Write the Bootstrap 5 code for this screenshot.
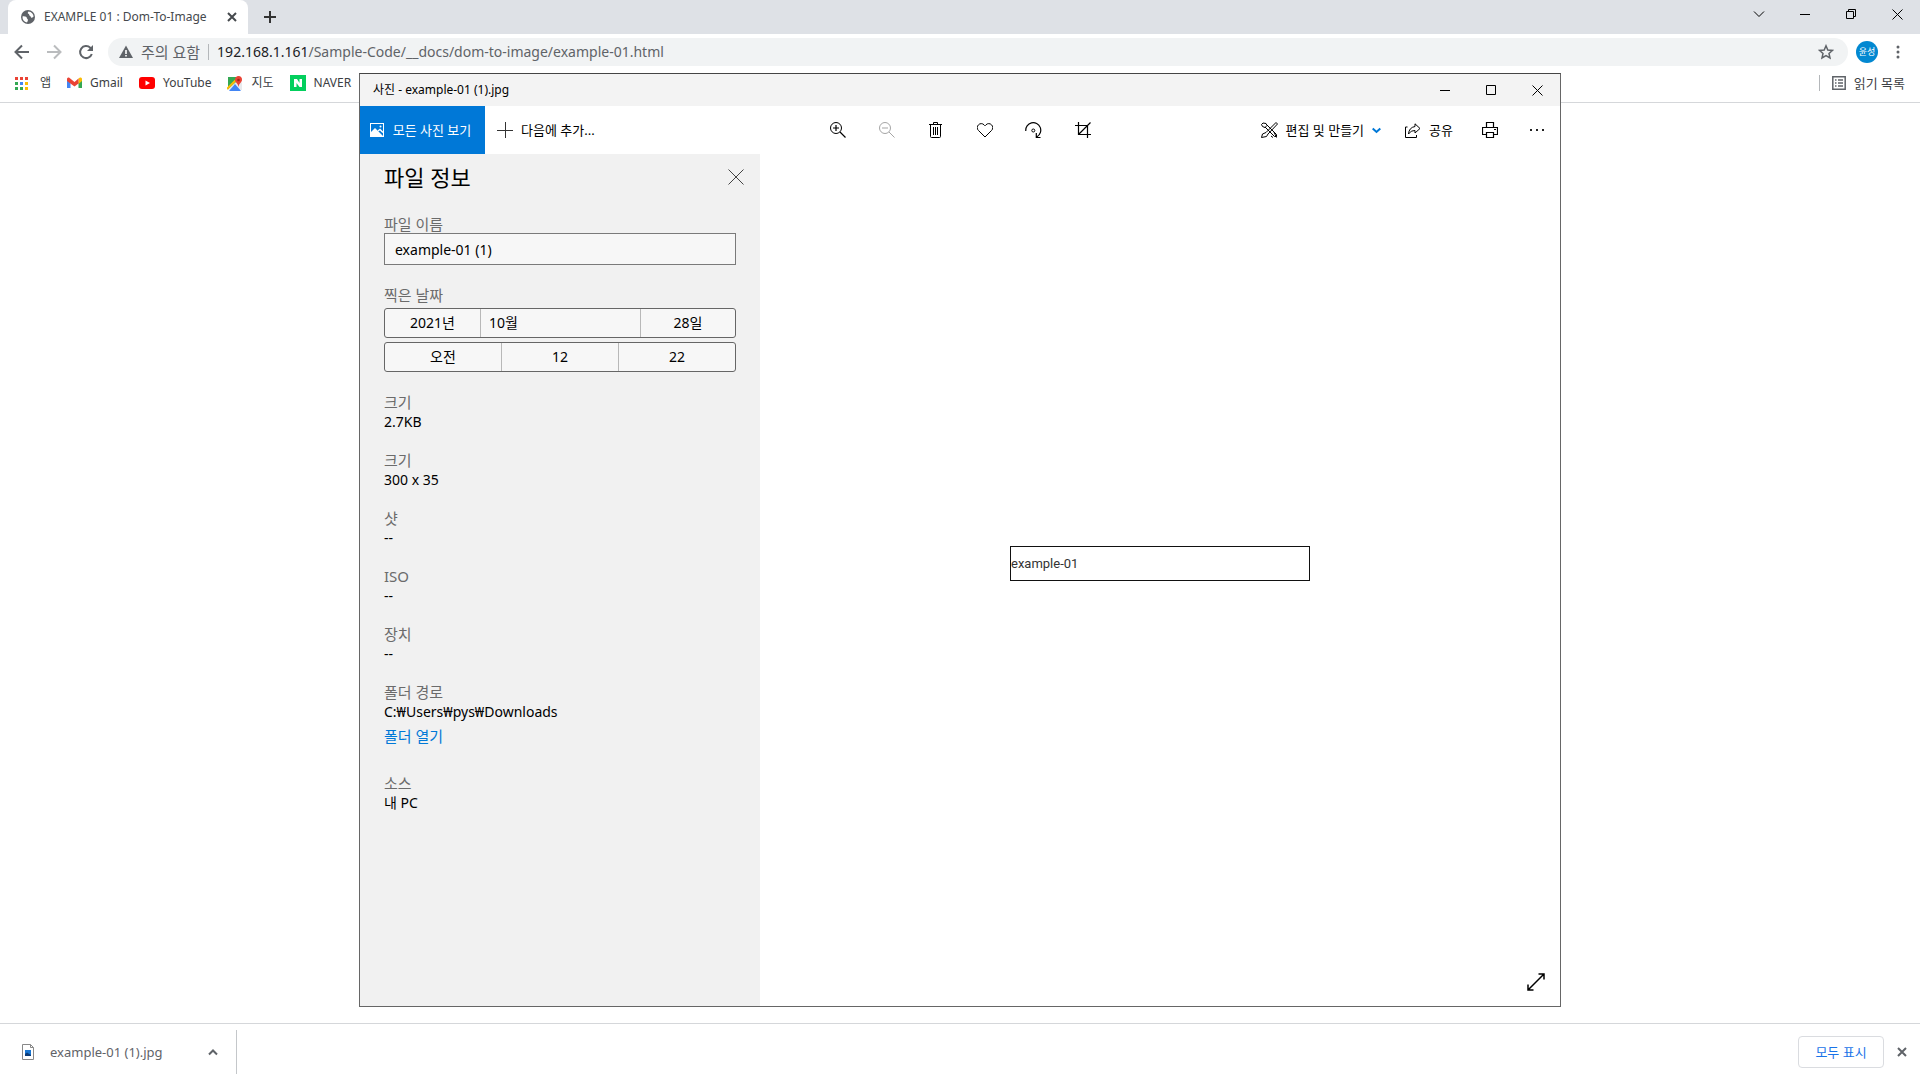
<!DOCTYPE html>
<html lang="ko">
<head>
<meta charset="utf-8">
<meta name="viewport" content="width=device-width, initial-scale=1">
<title>EXAMPLE 01 : Dom-To-Image</title>
<link href="https://cdn.jsdelivr.net/npm/bootstrap@5.3.0/dist/css/bootstrap.min.css" rel="stylesheet">
<style>
  body { font-family: "Noto Sans", "Noto Sans CJK KR", sans-serif; font-size: 12px; line-height: 20px; color: #000; background: #fff; overflow: hidden; }
  button, input { font: inherit; color: inherit; }
  svg { display: block; flex: none; }
  svg:not([fill]) { fill: none; }
  svg:not([stroke]) { stroke: currentColor; }
  .plain { background: none; border: 0; padding: 0; display: flex; align-items: center; justify-content: center; }
  /* browser chrome */
  .tabstrip { height: 34px; background: #dee1e6; padding-left: 8px; }
  .browser-tab { width: 240px; background: #fff; border-radius: 8px 8px 0 0; padding: 0 7px 0 12px; color: #45494d; }
  .ctl { width: 46px; height: 28px; }
  .addressbar { height: 36px; padding: 0 6px; color: #5f6368; }
  .nav-ico { width: 32px; height: 28px; }
  .omnibox { height: 28px; border-radius: 14px; background: #f1f3f4; margin-left: 6px; padding: 0 10px 0 11px; font-size: 15px; }
  .star { width: 24px; }
  .url-line { white-space: nowrap; font-size: 14px; }
  .url-host { color: #202124; }
  .avatar { width: 22px; height: 22px; border-radius: 50%; background: #0288d1; color: #fff; font-size: 9px; }
  .bookmarks { height: 33px; border-bottom: 1px solid #d5d7da; padding: 0 15px 6px; color: #3c4043; }
  .bookmarks a { color: inherit; text-decoration: none; display: flex; align-items: center; gap: 8px; }
  .bookmarks .reading { font-size: 13px; }
  .vline { width: 1px; height: 16px; background: #b4b7ba; }
  .downloads { height: 57px; border-top: 1px solid #d5d7da; color: #5f6368; font-size: 13px; }
  .dl-item { width: 237px; height: 44px; border-right: 1px solid #c4c7ca; padding: 0 18px 0 22px; }
  .dl-close { width: 36px; height: 32px; }
  .show-all { width: 86px; height: 32px; border: 1px solid #dadce0; border-radius: 4px; color: #1a73e8; background: #fff; }
  /* photo viewer window */
  .photo-win { position: absolute; inset: 73px 359px; border: 1px solid #666; border-top-color: #444; background: #fff; display: flex; flex-direction: column; }
  .win-title { height: 32px; background: #f3f3f3; padding-left: 13px; }
  .win-tools { height: 48px; font-size: 13px; }
  .see-all { width: 125px; background: #0078d7; color: #fff; gap: 9px; }
  .tool { width: 49px; height: 48px; }
  .info { width: 400px; background: #f1f1f1; padding: 12px 24px; font-size: 14px; }
  .info-head { margin: 0 -8px 27px 0; }
  .info h1 { font-size: 22px; line-height: 22px; margin: 0; font-weight: 400; }
  .info-label { display: block; color: #6b6b6b; font-size: 15px; line-height: 18px; }
  .info dt { color: #6b6b6b; font-weight: 400; font-size: 15px; }
  .info dd { margin: 0; }
  .info dl { margin: 20px 0 0; display: flex; flex-direction: column; gap: 18px; }
  .open-folder { color: #0078d7; font-size: 15px; }
  .name-box { height: 32px; border: 1px solid #7a7a7a; background: #f7f7f7; padding: 0 10px; width: 100%; display: block; border-radius: 0; margin-bottom: 21px; }
  .picker { height: 30px; border: 1px solid #666; border-radius: 3px; background: #f7f7f7; display: flex; margin-top: 4px; }
  .picker button { flex: 1 1 0; }
  .picker button + button { border-left: 1px solid #b8b8b8; }
  .picker .w-year { flex: 0 0 95px; }
  .photo { width: 300px; height: 35px; border: 1px solid #111; font: 13px/33px Roboto, sans-serif; color: #333; }
  .stage { padding-bottom: 33px; position: relative; }
  .expand { position: absolute; right: 15px; bottom: 15px; }
</style>
<script src="https://cdn.jsdelivr.net/npm/bootstrap@5.3.0/dist/js/bootstrap.bundle.min.js"></script>
</head>
<body class="vh-100 d-flex flex-column position-relative">
<header>
  <div class="tabstrip d-flex">
    <div class="browser-tab d-flex align-items-center">
      <svg width="16" height="16" viewBox="0 0 16 16" stroke="none"><circle cx="8" cy="8" r="7" fill="#5f6368"/><path d="M2.5 7.5C5 7 7 8 7 9.500C8.500 10 8 12 7 13.500C4 13 2.300 10.500 2.500 7.500ZM8.500 2.500C7 4 8 5 9 5C9 7 11 7 11 8.500C12 9 13 8.500 13.600 7.500C13.500 5 11.500 2.800 8.500 2.500Z" fill="#fff"/></svg>
      <span class="ms-2 flex-grow-1 text-nowrap">EXAMPLE 01 : Dom-To-Image</span>
      <button class="plain p-1" aria-label="탭 닫기"><svg width="10" height="10" stroke-width="2"><path d="M1 1L9 9M9 1L1 9"/></svg></button>
    </div>
    <button class="plain ms-3" aria-label="새 탭"><svg width="12" height="12" stroke="#333" stroke-width="2"><path d="M6 0V12M0 6H12"/></svg></button>
    <div class="d-flex ms-auto">
      <button class="plain ctl" aria-label="탭 검색"><svg width="12" height="12"><path d="M1 3.500L6 8.500L11 3.500"/></svg></button>
      <button class="plain ctl" aria-label="최소화"><svg width="10" height="10"><path d="M0 5.500H10"/></svg></button>
      <button class="plain ctl" aria-label="이전 크기로"><svg width="10" height="10"><path d="M.5 2.500H7.500V9.500H.5ZM2.500 2.500V.5H9.500V7.500H7.500"/></svg></button>
      <button class="plain ctl" aria-label="닫기"><svg width="11" height="11"><path d="M.5 .5L10.500 10.500M10.500 .5L.5 10.500"/></svg></button>
    </div>
  </div>
  <div class="addressbar d-flex align-items-center">
    <button class="plain nav-ico" aria-label="뒤로"><svg width="16" height="16" stroke-width="2"><path d="M15 8H2M8 1.500L1.500 8L8 14.500"/></svg></button>
    <button class="plain nav-ico" aria-label="앞으로"><svg width="16" height="16" stroke="#babcbe" stroke-width="2"><path d="M1 8H14M8 1.500L14.500 8L8 14.500"/></svg></button>
    <button class="plain nav-ico" aria-label="새로고침"><svg width="16" height="16" stroke-width="2"><path d="M13.800 10A6 6 0 1 1 12.300 3.800L13 4.500"/><path d="M15 1V7H9Z" fill="currentColor" stroke="none"/></svg></button>
    <div class="omnibox d-flex align-items-center flex-grow-1">
      <svg width="14" height="14" stroke="none"><path d="M7 .5L14 13H0Z" fill="#5f6368"/><path d="M6.200 5H7.800V9H6.200ZM6.200 10H7.800V11.500H6.200Z" fill="#fff"/></svg>
      <span class="ms-2 text-nowrap">주의 요함</span>
      <span class="vline mx-2"></span>
      <a href="#" class="url-line text-decoration-none flex-grow-1 text-reset"><span class="url-host">192.168.1.161</span>/Sample-Code/__docs/dom-to-image/example-01.html</a>
      <button class="plain star" aria-label="북마크"><svg width="16" height="16" stroke-width="1.500"><path d="M8 1.800L9.800 6L14.500 6.400L11 9.500L12 14L8 11.700L4 14L5 9.500L1.500 6.400L6.200 6Z"/></svg></button>
    </div>
    <button class="plain avatar ms-2 me-1" aria-label="윤성">윤성</button>
    <button class="plain nav-ico" aria-label="메뉴"><svg width="4" height="14" fill="currentColor" stroke="none"><circle cx="2" cy="2" r="1.500"/><circle cx="2" cy="7" r="1.500"/><circle cx="2" cy="12" r="1.500"/></svg></button>
  </div>
  <nav class="bookmarks d-flex align-items-center" aria-label="북마크">
    <a href="#" class="me-3"><svg width="13" height="13" stroke="none"><path d="M0 0H3V3H0ZM5 0H8V3H5ZM10 0H13V3H10Z" fill="#ea4335"/><path d="M0 5H3V8H0ZM0 10H3V13H0ZM5 10H8V13H5Z" fill="#34a853"/><path d="M5 5H8V8H5Z" fill="#4285f4"/><path d="M10 5H13V8H10ZM10 10H13V13H10Z" fill="#fbbc04"/></svg><span class="ps-1">앱</span></a>
    <a href="#" class="me-3"><svg width="15" height="12" stroke="none"><path d="M0 1.500V11H3.500V5Z" fill="#4285f4"/><path d="M15 1.500V11H11.500V5Z" fill="#34a853"/><path d="M11.500 1.500L13 .5Q15 0 15 2V4L11.500 7Z" fill="#fbbc04"/><path d="M0 2Q0 0 2 .5L7.500 5L11.500 1.500V6.500L7.500 9.500L0 4Z" fill="#ea4335"/></svg><span>Gmail</span></a>
    <a href="#" class="me-3"><svg width="16" height="12" stroke="none"><rect width="16" height="12" rx="3" fill="#f00"/><path d="M6.500 3.500L11 6L6.500 8.500Z" fill="#fff"/></svg><span>YouTube</span></a>
    <a href="#" class="me-3"><svg width="16" height="15" stroke="none"><path d="M1 1H11L15 7V14H1Z" fill="#e8eaed"/><path d="M1 1H10L9 6L1 13Z" fill="#34a853"/><path d="M2 15L8 8L14 15Z" fill="#4285f4"/><path d="M0 13L12 1" stroke="#fbbc04" stroke-width="2"/><path d="M11.500 0A3.800 3.800 0 0 1 15 4C15 6.500 12 7 11.500 11C11 7 8 6.500 8 4A3.600 3.600 0 0 1 11.500 0Z" fill="#ea4335"/><circle cx="11.500" cy="4" r="1.300" fill="#a52714"/></svg><span>지도</span></a>
    <a href="#"><svg width="16" height="16" stroke="none"><rect width="16" height="16" fill="#03cf5d"/><path d="M4 4H7L9.500 8V4H12V12H9.500L6.500 8V12H4Z" fill="#fff"/></svg><span>NAVER</span></a>
    <span class="vline ms-auto me-2"></span>
    <a href="#" class="reading ms-1"><svg width="14" height="14" stroke="#5f6368" stroke-width="1.500"><path d="M.8 .8H13.200V13.200H.8ZM3 4H4.500M6 4H11M3 7H4.500M6 7H11M3 10H4.500M6 10H11"/></svg><span>읽기 목록</span></a>
  </nav>
</header>

<main class="flex-grow-1"></main>

<section class="photo-win" aria-label="사진">
  <div class="win-title d-flex align-items-center">
    <span class="flex-grow-1">사진 - example-01 (1).jpg</span>
    <button class="plain ctl" aria-label="최소화"><svg width="10" height="10"><path d="M0 5.500H10"/></svg></button>
    <button class="plain ctl" aria-label="최대화"><svg width="10" height="10"><path d="M.5 .5H9.500V9.500H.5Z"/></svg></button>
    <button class="plain ctl" aria-label="닫기"><svg width="11" height="11"><path d="M.5 .5L10.500 10.500M10.500 .5L.5 10.500"/></svg></button>
  </div>
  <div class="win-tools d-flex">
    <div class="d-flex flex-fill w-50">
      <button class="plain see-all pe-1"><svg width="14" height="14"><rect x=".5" y=".5" width="13" height="13"/><path d="M1 9L5 5L13 13H1Z" fill="currentColor" stroke="none"/><path d="M8 8L10 6.500L13 9.500" stroke-width="1.500"/><circle cx="10.500" cy="3.500" r="1" fill="currentColor" stroke="none"/></svg><span>모든 사진 보기</span></button>
      <button class="plain gap-2 ms-2 ps-1"><svg width="16" height="16" stroke="#333"><path d="M8.500 0V16M0 8.500H16"/></svg><span>다음에 추가...</span></button>
    </div>
    <div class="d-flex">
      <button class="plain tool" aria-label="확대"><svg width="16" height="16"><circle cx="6" cy="6" r="5.500"/><path d="M10 10L15.500 15.500M3 6H9M6 3V9" stroke-width="1.200"/></svg></button>
      <button class="plain tool" aria-label="축소" disabled><svg width="16" height="16" stroke="#a5a5a5"><circle cx="6" cy="6" r="5.500"/><path d="M10 10L15.500 15.500M3 6H9"/></svg></button>
      <button class="plain tool" aria-label="삭제"><svg width="13" height="16"><path d="M0 2.500H13M4.500 2V.5H8.500V2M1.500 3V14.500Q1.500 15.500 2.500 15.500H10.500Q11.500 15.500 11.500 14.500V3M4.500 5V13M6.500 5V13M8.500 5V13"/></svg></button>
      <button class="plain tool" aria-label="즐겨찾기"><svg width="16" height="16"><path d="M8 15L1.500 8.500A3.800 3.800 0 0 1 1.500 2.800A3.800 3.800 0 0 1 7 2.800L8 3.800L9 2.800A3.800 3.800 0 0 1 14.500 2.800A3.800 3.800 0 0 1 14.500 8.500Z"/></svg></button>
      <button class="plain tool" aria-label="회전"><svg width="17" height="17"><path d="M.8 9A7.500 7.500 0 1 1 12 14.700M11.300 11V15.500H15.500" stroke-width="1.200"/><circle cx="8.300" cy="8.500" r="1.500"/></svg></button>
      <button class="plain tool" aria-label="자르기"><svg width="16" height="16"><path d="M0 3.500H12.500V16M3.500 0V12.500H16M3.500 12.500L15.500 .5" stroke-width="1.200"/></svg></button>
    </div>
    <div class="d-flex flex-fill w-50 justify-content-end">
      <button class="plain gap-2 pe-3"><svg width="17" height="16"><path d="M4 5L13.500 14.500H15.500V12.500L6 3M2 1L5 1.500L6 3.500L4 5.500L1.500 4.500L.5 2.500ZM15 .5L5 10.500M16.500 2L7 12M15 .5L16.500 2M5 10.500L1.500 12L.5 15.500L5.500 14.500L7 12M10 14L12 15.500M13 10L15.500 15.500"/></svg><span>편집 및 만들기</span><svg width="9" height="9" stroke="#0078d7" stroke-width="2"><path d="M.7 2.500L4.500 6L8.300 2.500"/></svg></button>
      <button class="plain gap-2 px-2"><svg width="16" height="15"><path d="M2.500 4H.5V14.500H11.500V12M10 .8L15 5.500L10 10V7.500Q6 7 3.500 11Q4 4.500 10 3.500Z"/></svg><span>공유</span></button>
      <button class="plain tool ms-1" aria-label="인쇄"><svg width="16" height="16"><path d="M4.500 5V.5H11.500V5M4 12.500H.5V5.500H15.500V12.500H12M4.500 10.500H11.500V15.500H4.500ZM12 7.500H14" stroke-width="1.200"/></svg></button>
      <button class="plain ctl h-100" aria-label="더 보기"><svg width="14" height="4" stroke="none"><path d="M0 1H2V3H0ZM6 1H8V3H6ZM12 1H14V3H12Z" fill="#222"/></svg></button>
    </div>
  </div>
  <div class="d-flex flex-grow-1">
    <aside class="info">
      <div class="info-head d-flex align-items-center">
        <h1 class="flex-grow-1">파일 정보</h1>
        <button class="plain" aria-label="닫기"><svg width="16" height="16" stroke="#444"><path d="M.5 .5L15.500 15.500M15.500 .5L.5 15.500"/></svg></button>
      </div>
      <label for="fname" class="info-label">파일 이름</label>
      <input id="fname" class="name-box" value="example-01 (1)">
      <div id="taken" class="info-label">찍은 날짜</div>
      <div class="picker" role="group" aria-labelledby="taken">
        <button class="plain w-year">2021년</button><button class="plain justify-content-start px-2">10월</button><button class="plain w-year">28일</button>
      </div>
      <div class="picker" role="group" aria-labelledby="taken">
        <button class="plain">오전</button><button class="plain">12</button><button class="plain">22</button>
      </div>
      <dl>
        <div><dt>크기</dt><dd>2.7KB</dd></div>
        <div><dt>크기</dt><dd>300 x 35</dd></div>
        <div><dt>샷</dt><dd>--</dd></div>
        <div><dt>ISO</dt><dd>--</dd></div>
        <div><dt>장치</dt><dd>--</dd></div>
        <div class="mb-2"><dt>폴더 경로</dt><dd>C:₩Users₩pys₩Downloads</dd><dd class="pt-1"><a href="#" class="open-folder text-decoration-none">폴더 열기</a></dd></div>
        <div><dt>소스</dt><dd>내 PC</dd></div>
      </dl>
    </aside>
    <div class="stage flex-grow-1 d-flex align-items-center justify-content-center">
      <div class="photo">example-01</div>
      <button class="plain expand" aria-label="전체 화면"><svg width="18" height="18" stroke-width="1.500"><path d="M1 17L17 1M11.500 1H17V6.500M1 11.500V17H6.500"/></svg></button>
    </div>
  </div>
</section>

<footer class="downloads d-flex align-items-center">
  <div class="dl-item d-flex align-items-center">
    <svg width="12" height="16"><path d="M.5 .5H8.500L11.500 3.500V15.500H.5ZM8.500 .5V3.500H11.500" stroke="#888" fill="#fff"/><path d="M3 6H9V12H3Z" fill="#1976d2" stroke="none"/><path d="M3 10L5 8.500L9 11V12H3Z" fill="#0d3c78" stroke="none"/></svg>
    <a href="#" class="text-reset text-decoration-none flex-grow-1 ps-3">example-01 (1).jpg</a>
    <button class="plain" aria-label="더 보기"><svg width="10" height="8" stroke-width="2"><path d="M1 6.500L5 2.500L9 6.500"/></svg></button>
  </div>
  <button class="show-all ms-auto">모두 표시</button>
  <button class="plain dl-close" aria-label="닫기"><svg width="10" height="10" stroke-width="2"><path d="M1 1L9 9M9 1L1 9"/></svg></button>
</footer>
</body>
</html>
